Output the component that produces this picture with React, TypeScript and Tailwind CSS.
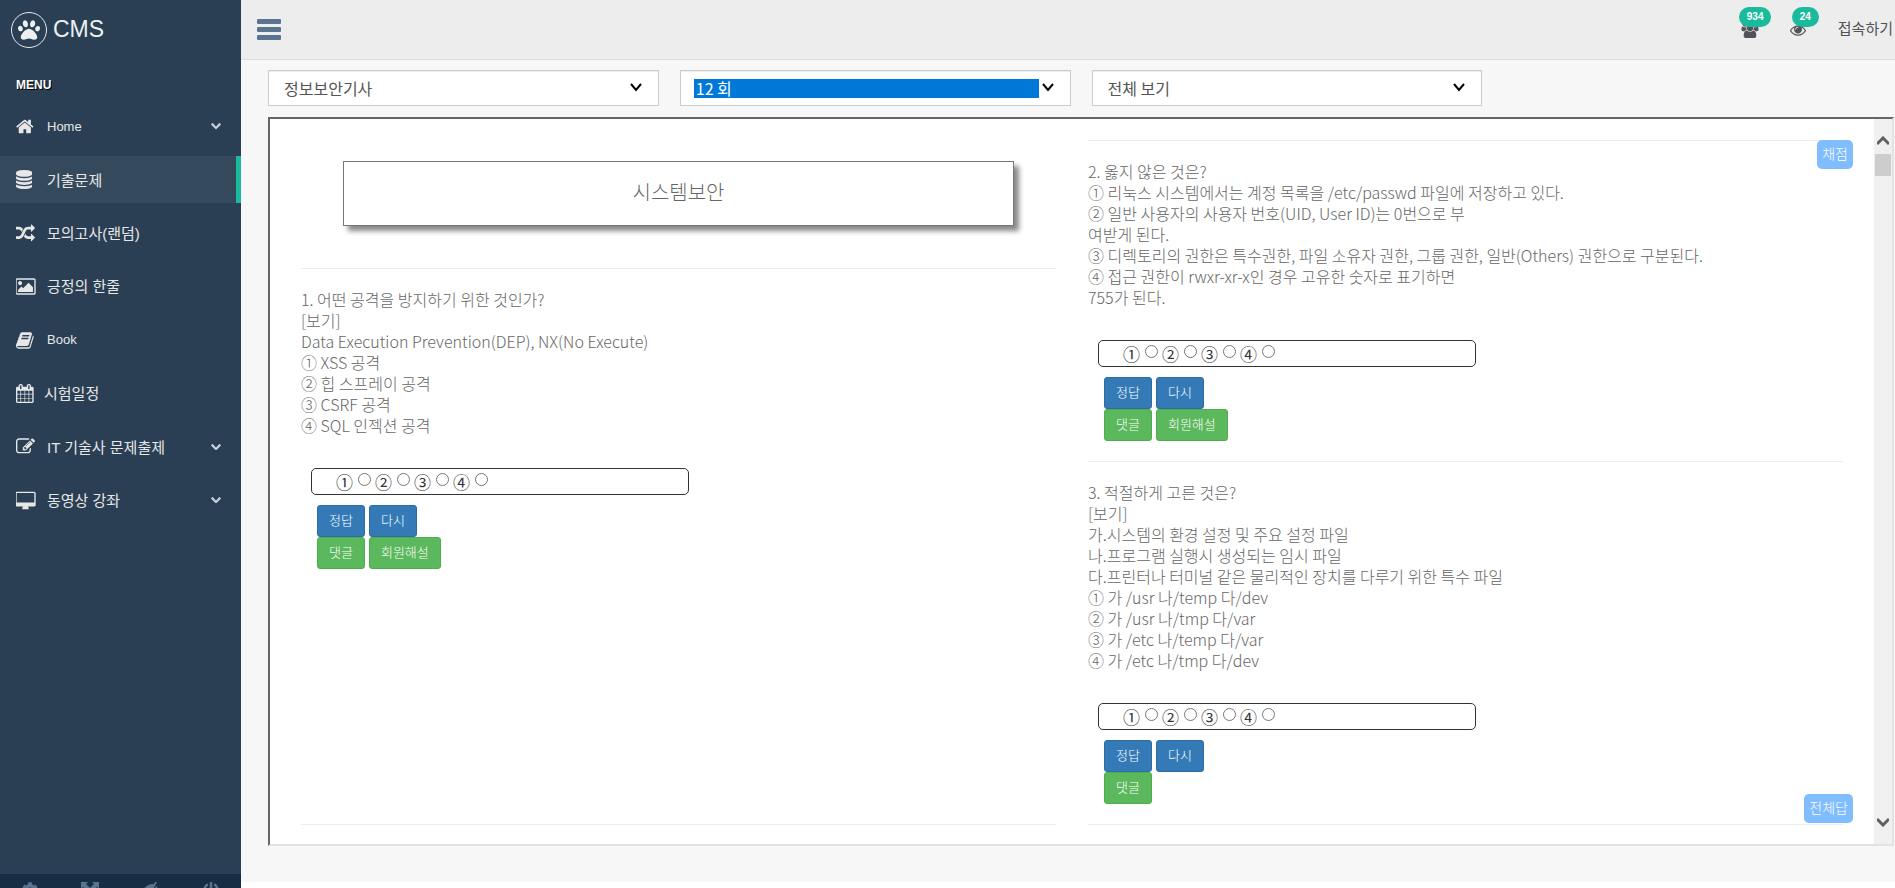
import { useState } from "react";
import { FaCog, FaPaw, FaPowerOff } from "react-icons/fa";

type IconProps = { box: string; d: string; className?: string };

const Icon = ({ box, d, className = "h-[19px] w-auto" }: IconProps) => (
  <svg viewBox={box} className={className} fill="currentColor" aria-hidden="true">
    <path d={d} />
  </svg>
);

const icons = {
  home: {
    box: "64 0 1664 1792",
    d: "M1472 992v480q0 26-19 45t-45 19h-384v-384h-256v384h-384q-26 0-45-19t-19-45v-480q0-1 .5-3t.5-3l575-474 575 474q1 2 1 6zm223-69l-62 74q-8 9-21 11h-3q-13 0-21-7l-692-577-692 577q-12 8-24 7-13-2-21-11l-62-74q-8-10-7-23.5t11-21.5l719-599q32-26 76-26t76 26l244 204v-195q0-14 9-23t23-9h192q14 0 23 9t9 23v408l219 182q10 8 11 21.5t-7 23.5z",
  },
  database: {
    box: "128 0 1536 1792",
    d: "M896 768q237 0 443-43t325-127v170q0 69-103 128t-280 93.5-385 34.5-385-34.5-280-93.5-103-128v-170q119 84 325 127t443 43zm0 768q237 0 443-43t325-127v170q0 69-103 128t-280 93.5-385 34.5-385-34.5-280-93.5-103-128v-170q119 84 325 127t443 43zm0-384q237 0 443-43t325-127v170q0 69-103 128t-280 93.5-385 34.5-385-34.5-280-93.5-103-128v-170q119 84 325 127t443 43zm0-1152q208 0 385 34.5t280 93.5 103 128v128q0 69-103 128t-280 93.5-385 34.5-385-34.5-280-93.5-103-128v-128q0-69 103-128t280-93.5 385-34.5z",
  },
  random: {
    box: "0 0 1792 1792",
    d: "M666 481q-60 92-137 273-22-45-37-72.5t-40.5-63.5-51-56.5-63-35-81.5-14.5h-224q-14 0-23-9t-9-23v-192q0-14 9-23t23-9h224q250 0 410 225zm1126 799q0 14-9 23l-320 320q-9 9-23 9-13 0-22.5-9.5t-9.5-22.5v-192q-32 0-85 .5t-81 1-73-1-71-5-64-10.5-63-18.5-58-28.5-59-40-55-53.5-56-69.5q59-93 136-273 22 45 37 72.5t40.5 63.5 51 56.5 63 35 81.5 14.5h256v-192q0-14 9-23t23-9q12 0 24 10l319 319q9 9 9 23zm0-896q0 14-9 23l-320 320q-9 9-23 9-13 0-22.5-9.5t-9.5-22.5v-192h-256q-48 0-87 15t-69 45-51 61.5-45 77.5q-32 62-78 171-29 66-49.5 111t-54 105-64 100-74 83-90 68.5-106.5 42-128 16.5h-224q-14 0-23-9t-9-23v-192q0-14 9-23t23-9h224q48 0 87-15t69-45 51-61.5 45-77.5q32-62 78-171 29-66 49.5-111t54-105 64-100 74-83 90-68.5 106.5-42 128-16.5h256v-192q0-14 9-23t23-9q12 0 24 10l319 319q9 9 9 23z",
  },
  image: {
    box: "0 0 1920 1792",
    d: "M576 576q0 80-56 136t-136 56-136-56-56-136 56-136 136-56 136 56 56 136zm1024 384v448h-1408v-192l320-320 160 160 512-512zm96-704h-1600q-13 0-22.5 9.5t-9.5 22.5v1216q0 13 9.5 22.5t22.5 9.5h1600q13 0 22.5-9.5t9.5-22.5v-1216q0-13-9.5-22.5t-22.5-9.5zm160 32v1216q0 66-47 113t-113 47h-1600q-66 0-113-47t-47-113v-1216q0-66 47-113t113-47h1600q66 0 113 47t47 113z",
  },
  book: {
    box: "64 0 1664 1792",
    d: "M1703 478q40 57 18 129l-275 906q-19 64-76.5 107.5t-122.5 43.5h-923q-77 0-148.5-53.5t-99.5-131.5q-24-67-2-127 0-4 3-27t4-37q1-8-3-21.5t-3-19.5q2-11 8-21t16.5-23.5 16.5-23.5q23-38 45-91.5t30-91.5q3-10 .5-30t-.5-28q3-11 17-28t17-23q21-36 42-92t25-90q1-9-2.5-32t.5-28q4-13 22-30.5t22-22.5q19-26 42.5-84.5t27.5-96.5q1-8-3-25.5t-2-26.5q2-8 9-18t18-23 17-21q8-12 16.5-30.5t15-35 16-36 19.5-32 26.5-23.5 36-11.5 47.5 5.5l-1 3q38-9 51-9h761q74 0 114 56t18 130l-274 906q-36 119-71.5 153.5t-128.5 34.5h-869q-27 0-38 15-11 16-1 43 24 70 144 70h923q29 0 56-15.5t35-41.5l300-987q7-22 5-57 38 15 59 43zm-1064 2q-4 13 2 22.5t20 9.5h608q13 0 25.5-9.5t16.5-22.5l21-64q4-13-2-22.5t-20-9.5h-608q-13 0-25.5 9.5t-16.5 22.5zm-83 256q-4 13 2 22.5t20 9.5h608q13 0 25.5-9.5t16.5-22.5l21-64q4-13-2-22.5t-20-9.5h-608q-13 0-25.5 9.5t-16.5 22.5z",
  },
  calendar: {
    box: "64 0 1664 1792",
    d: "M192 1664h288v-288h-288v288zm352 0h320v-288h-320v288zm-352-352h288v-320h-288v320zm352 0h320v-320h-320v320zm-352-384h288v-288h-288v288zm736 736h320v-288h-320v288zm-384-736h320v-288h-320v288zm768 736h288v-288h-288v288zm-384-352h320v-320h-320v320zm-352-864v-288q0-13-9.5-22.5t-22.5-9.5h-64q-13 0-22.5 9.5t-9.5 22.5v288q0 13 9.5 22.5t22.5 9.5h64q13 0 22.5-9.5t9.5-22.5zm736 864h288v-320h-288v320zm-384-384h320v-288h-320v288zm384 0h288v-288h-288v288zm32-480v-288q0-13-9.5-22.5t-22.5-9.5h-64q-13 0-22.5 9.5t-9.5 22.5v288q0 13 9.5 22.5t22.5 9.5h64q13 0 22.5-9.5t9.5-22.5zm384-64v1280q0 52-38 90t-90 38h-1408q-52 0-90-38t-38-90v-1280q0-52 38-90t90-38h128v-96q0-66 47-113t113-47h64q66 0 113 47t47 113v96h384v-96q0-66 47-113t113-47h64q66 0 113 47t47 113v96h128q52 0 90 38t38 90z",
  },
  edit: {
    box: "0 0 1792 1792",
    d: "M888 1184l116-116-152-152-116 116v56h96v96h56zm440-720q-16-16-33 1l-350 350q-17 17-1 33t33-1l350-350q17-17 1-33zm80 594v190q0 119-84.5 203.5t-203.5 84.5h-832q-119 0-203.5-84.5t-84.5-203.5v-832q0-119 84.5-203.5t203.5-84.5h832q63 0 117 25 15 7 18 23 3 17-9 29l-49 49q-14 14-32 8-23-6-45-6h-832q-66 0-113 47t-47 113v832q0 66 47 113t113 47h832q66 0 113-47t47-113v-126q0-13 9-22l64-64q15-15 35-7t20 29zm-96-738l288 288-672 672h-288v-288zm444 132l-92 92-288-288 92-92q28-28 68-28t68 28l152 152q28 28 28 68t-28 68z",
  },
  desktop: {
    box: "0 -64 1920 1792",
    d: "M1728 992v-832q0-13-9.5-22.5t-22.5-9.5h-1600q-13 0-22.5 9.5t-9.5 22.5v832q0 13 9.5 22.5t22.5 9.5h1600q13 0 22.5-9.5t9.5-22.5zm128-832v1088q0 66-47 113t-113 47h-544q0 37 16 77.5t32 71 16 43.5q0 26-19 45t-45 19h-512q-26 0-45-19t-19-45q0-14 16-44t32-70 16-78h-544q-66 0-113-47t-47-113v-1088q0-66 47-113t113-47h1600q66 0 113 47t47 113z",
  },
  chevron: {
    box: "90 532 1612 1037",
    d: "M1683 808l-742 741q-19 19-45 19t-45-19l-742-741q-19-19-19-45.5t19-45.5l166-165q19-19 45-19t45 19l531 531 531-531q19-19 45-19t45 19l166 165q19 19 19 45.5t-19 45.5z",
  },
  users: {
    box: "0 0 1920 1792",
    d: "M593 896q-162 5-265 128h-134q-82 0-138-40.5t-56-118.5q0-353 124-353 6 0 43.5 21t97.5 42.5 119 21.5q67 0 133-23-5 37-5 66 0 139 81 256zm1071 637q0 120-73 189.5t-194 69.5h-874q-121 0-194-69.5t-73-189.5q0-53 3.5-103.5t14-109 26.5-108.5 43-97.5 62-81 85.5-53.5 111.5-20q10 0 43 21.5t73 48 107 48 135 21.5 135-21.5 107-48 73-48 43-21.5q61 0 111.5 20t85.5 53.5 62 81 43 97.5 26.5 108.5 14 109 3.5 103.5zm-1024-1277q0 106-75 181t-181 75-181-75-75-181 75-181 181-75 181 75 75 181zm704 384q0 159-112.5 271.5t-271.5 112.5-271.5-112.5-112.5-271.5 112.5-271.5 271.5-112.5 271.5 112.5 112.5 271.5zm576 225q0 78-56 118.5t-138 40.5h-134q-103-123-265-128 81-117 81-256 0-29-5-66 66 23 133 23 59 0 119-21.5t97.5-42.5 43.5-21q124 0 124 353zm-128-609q0 106-75 181t-181 75-181-75-75-181 75-181 181-75 181 75 75 181z",
  },
  eye: {
    box: "0 0 1792 1792",
    d: "M1664 960q-152-236-381-353 61 104 61 225 0 185-131.5 316.5t-316.5 131.5-316.5-131.5-131.5-316.5q0-121 61-225-229 117-381 353 133 205 333.5 326.5t434.5 121.5 434.5-121.5 333.5-326.5zm-720-384q0-20-14-34t-34-14q-125 0-214.5 89.5t-89.5 214.5q0 20 14 34t34 14 34-14 14-34q0-86 61-147t147-61q20 0 34-14t14-34zm848 384q0 34-20 69-140 230-376.5 368.5t-499.5 138.5-499.5-139-376.5-368q-20-35-20-69t20-69q140-229 376.5-368t499.5-139 499.5 139 376.5 368q20 35 20 69z",
  },
  fullscreen: {
    box: "0 0 18 18",
    d: "M0 0h7L5 2l4 4 4-4-2-2h7v7l-2-2-4 4 4 4 2-2v7h-7l2-2-4-4-4 4 2 2H0v-7l2 2 4-4-4-4-2 2z",
  },
  eyeClose: {
    box: "0 0 16 16",
    d: "M12 0l2 0-8 15H4l1-2Q2 11.500 0 8.500 3 2.500 9 2q1 0 2 .3zM13 4q2 1.500 3 4.500-2 4-7 5z",
  },
};

const menu = [
  { label: "Home", icon: icons.home, latin: true, sub: true },
  { label: "기출문제", icon: icons.database, active: true },
  { label: "모의고사(랜덤)", icon: icons.random },
  { label: "긍정의 한줄", icon: icons.image },
  { label: "Book", icon: icons.book, latin: true },
  { label: "시험일정", icon: icons.calendar, tight: true },
  { label: "IT 기술사 문제출제", icon: icons.edit, sub: true },
  { label: "동영상 강좌", icon: icons.desktop, sub: true },
];

const Sidebar = () => (
  <aside className="flex w-[241px] shrink-0 flex-col bg-[#2a3f54] text-[#e7e7e7]">
    <a href="#" className="flex h-[59px] items-center gap-[6px] pl-[11px]">
      <span className="flex size-9 items-center justify-center rounded-full border border-[#eaeaea]">
        <FaPaw className="size-[22px] text-[#ecf0f1]" />
      </span>
      <span className="text-[23px] text-[#ecf0f1]">CMS</span>
    </a>
    <h3 className="mt-4 pl-4 text-xs leading-5 font-bold text-white [text-shadow:1px_1px_#000]">
      MENU
    </h3>
    <nav className="mt-2 grid h-[427px] auto-rows-fr">
      {menu.map((item) => (
        <a
          key={item.label}
          href="#"
          className={`flex h-[47px] items-center pl-4 ${
            item.active ? "border-r-[5px] border-[#1abb9c] bg-[#35495d]" : ""
          }`}
        >
          <span className={`flex shrink-0 ${item.tight ? "w-7" : "w-[31px]"}`}>
            <Icon {...item.icon} />
          </span>
          <span className={item.latin ? "text-[13px]" : "pt-[2px] text-[15px]"}>{item.label}</span>
          {item.sub && (
            <Icon {...icons.chevron} className="mr-5 ml-auto w-[10px] text-[#c4cfda]" />
          )}
        </a>
      ))}
    </nav>
    <div className="mt-auto grid h-[14px] grid-cols-4 justify-items-center overflow-hidden bg-[#172d44] pt-2 text-[#5a738e]">
      <button type="button" aria-label="Settings" className="h-4">
        <FaCog className="size-4" />
      </button>
      <button type="button" aria-label="FullScreen" className="h-4">
        <Icon {...icons.fullscreen} className="size-[18px]" />
      </button>
      <button type="button" aria-label="Lock" className="h-4">
        <Icon {...icons.eyeClose} className="size-4" />
      </button>
      <button type="button" aria-label="Logout" className="h-4">
        <FaPowerOff className="size-4" />
      </button>
    </div>
  </aside>
);

const TopNav = () => (
  <header className="flex h-[60px] items-center justify-between border-b border-[#d9dee4] bg-[#ededed] pr-[2px] pl-4">
    <button type="button" aria-label="메뉴" className="text-[#5a738e]">
      <svg viewBox="0 0 24 21" className="h-[21px] w-6" fill="currentColor">
        <rect width="24" height="5" rx="1" />
        <rect y="8" width="24" height="5" rx="1" />
        <rect y="16" width="24" height="5" rx="1" />
      </svg>
    </button>
    <div className="flex items-center text-[15px] text-[#515356]">
      <a href="#" className="relative mr-[31px]">
        <Icon {...icons.users} className="h-4 w-[18px]" />
        <span className="absolute -top-[15px] -left-[2px] rounded-full bg-[#1abb9c] px-2 text-[10px] leading-5 font-bold text-white">
          934
        </span>
      </a>
      <a href="#" className="relative mr-8">
        <Icon {...icons.eye} className="size-4" />
        <span className="absolute -top-[15px] left-[2px] rounded-full bg-[#1abb9c] px-2 text-[10px] leading-5 font-bold text-white">
          24
        </span>
      </a>
      <a href="#">접속하기</a>
    </div>
  </header>
);

const SelectArrow = () => (
  <svg
    viewBox="0 0 12 9"
    className="pointer-events-none absolute top-3 right-4 h-[9px] w-3"
    fill="none"
    stroke="#000"
    strokeWidth="2"
  >
    <path d="M1 1l5 6 5-6" />
  </svg>
);

const selects = [
  { label: "자격증", value: "정보보안기사" },
  { label: "회차", value: "12 회", focused: true },
  { label: "보기", value: "전체 보기" },
];

const Filters = () => (
  <div className="grid grid-cols-4 gap-[21px]">
    {selects.map((s) => (
      <div
        key={s.label}
        className="relative flex h-9 items-center border border-[#ccc] bg-white pr-[31px] pl-[13px] shadow-[inset_0_1px_1px_rgba(0,0,0,0.075)]"
      >
        <select
          aria-label={s.label}
          className={`h-[19px] w-full appearance-none px-[2px] text-base leading-[17px] outline-none ${
            s.focused ? "bg-[#0078d7] text-white" : "text-[#555]"
          }`}
        >
          <option>{s.value}</option>
        </select>
        <SelectArrow />
      </div>
    ))}
  </div>
);

const q1 = [
  "1. 어떤 공격을 방지하기 위한 것인가?",
  "[보기]",
  "Data Execution Prevention(DEP), NX(No Execute)",
  "① XSS 공격",
  "② 힙 스프레이 공격",
  "③ CSRF 공격",
  "④ SQL 인젝션 공격",
];

const q2 = [
  "2. 옳지 않은 것은?",
  "① 리눅스 시스템에서는 계정 목록을 /etc/passwd 파일에 저장하고 있다.",
  "② 일반 사용자의 사용자 번호(UID, User ID)는 0번으로 부",
  "여받게 된다.",
  "③ 디렉토리의 권한은 특수권한, 파일 소유자 권한, 그룹 권한, 일반(Others) 권한으로 구분된다.",
  "④ 접근 권한이 rwxr-xr-x인 경우 고유한 숫자로 표기하면",
  "755가 된다.",
];

const q3 = [
  "3. 적절하게 고른 것은?",
  "[보기]",
  "가.시스템의 환경 설정 및 주요 설정 파일",
  "나.프로그램 실행시 생성되는 임시 파일",
  "다.프린터나 터미널 같은 물리적인 장치를 다루기 위한 특수 파일",
  "① 가 /usr 나/temp 다/dev",
  "② 가 /usr 나/tmp 다/var",
  "③ 가 /etc 나/temp 다/var",
  "④ 가 /etc 나/tmp 다/dev",
];

const button = "h-8 rounded-[3px] border px-[11px] pb-[3px] text-white";
const blue = `${button} border-[#2e6da4] bg-[#337ab7]`;
const green = `${button} border-[#4cae4c] bg-[#5cb85c]`;

type QuestionProps = { name: string; lines: string[]; explain?: boolean };

const Question = ({ name, lines, explain }: QuestionProps) => {
  const [picked, setPicked] = useState("");

  return (
    <section>
      <hr className="border-[#eee]" />
      <div className="mt-5 text-base leading-[21px]">
        {lines.map((line) => (
          <p key={line}>{line}</p>
        ))}
      </div>
      <div className="mt-8 ml-[10px] flex h-[27px] w-1/2 items-center gap-1 rounded-[5px] border border-[#333] pl-6 text-[17px] leading-5 font-normal text-[#333]">
        {["①", "②", "③", "④"].map((n) => (
          <label key={n} className="flex items-center gap-[5px]">
            {n}
            <input
              type="radio"
              name={name}
              checked={picked === n}
              onChange={() => setPicked(n)}
              className="mb-1 size-[13px] appearance-none rounded-full border border-[#777] bg-white checked:border-4"
            />
          </label>
        ))}
      </div>
      <div className="mt-[10px] mb-5 ml-4 text-[13px]">
        <div className="flex gap-1">
          <button type="button" className={blue}>정답</button>
          <button type="button" className={blue} onClick={() => setPicked("")}>다시</button>
        </div>
        <div className="flex gap-1">
          <button type="button" className={green}>댓글</button>
          {explain && <button type="button" className={green}>회원해설</button>}
        </div>
      </div>
    </section>
  );
};

const ScrollBar = () => (
  <div className="flex w-[18px] shrink-0 flex-col items-center bg-[#f0f0f0] py-[17px]">
    <svg viewBox="0 0 12 10" className="h-[10px] w-3" fill="none" stroke="#606060" strokeWidth="3">
      <path d="M0 8l6-6 6 6" />
    </svg>
    <div className="mt-2 h-[22px] w-4 bg-[#cdcdcd]" />
    <svg viewBox="0 0 12 10" className="mt-auto h-[10px] w-3" fill="none" stroke="#606060" strokeWidth="3">
      <path d="M0 2l6 6 6-6" />
    </svg>
  </div>
);

const floating =
  "absolute right-[21px] rounded-[5px] bg-[#80bdff] px-[5px] pb-[2px] text-sm leading-[27px] text-white";

const Exam = () => (
  <div className="mt-[11px] flex border-2 border-t-[#666] border-r-[#e3e3e3] border-b-[#e3e3e3] border-l-[#666] bg-white font-light text-[#666]">
    <div className="relative grid grow grid-cols-2 gap-8 px-[31px] pb-[19px]">
      <div className="flex flex-col">
        <h1 className="mx-[42px] my-[42px] border border-[#777] pb-[3px] text-center text-xl leading-[60px] shadow-[5px_5px_5px_#888]">
          시스템보안
        </h1>
        <Question name="q1" lines={q1} explain />
        <hr className="mt-auto border-[#eee]" />
      </div>
      <div className="pt-[21px]">
        <Question name="q2" lines={q2} explain />
        <Question name="q3" lines={q3} />
        <hr className="border-[#eee]" />
      </div>
      <button type="button" className={`${floating} top-[21px]`}>채점</button>
      <button type="button" className={`${floating} bottom-[21px]`}>전체답</button>
    </div>
    <ScrollBar />
  </div>
);

export default function App() {
  return (
    <div className="flex min-h-screen bg-white font-['Liberation_Sans','Noto_Sans_CJK_KR',sans-serif]">
      <Sidebar />
      <div className="min-w-0 grow">
        <TopNav />
        <main className="bg-[#f7f7f7] pt-[10px] pr-px pb-9 pl-[27px] font-['Noto_Sans_CJK_KR',sans-serif]">
          <Filters />
          <Exam />
        </main>
      </div>
    </div>
  );
}
